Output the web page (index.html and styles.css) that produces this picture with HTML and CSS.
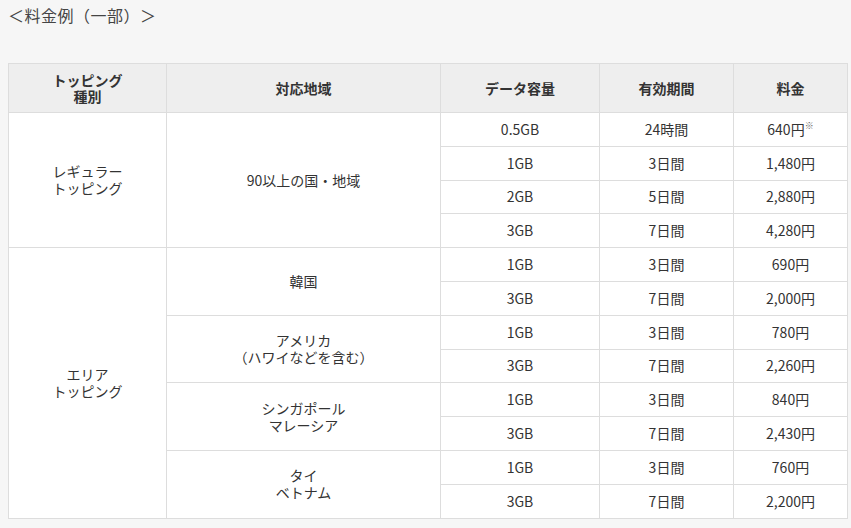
FILE: index.html
```html
<!DOCTYPE html>
<html lang="ja">
<head>
<meta charset="utf-8">
<link rel="stylesheet" href="styles.css">
</head>
<body>
<p class="title">＜料金例（一部）＞</p>
<table class="price">
<colgroup>
<col class="c1"><col class="c2"><col class="c3"><col class="c4"><col class="c5">
</colgroup>
<thead>
<tr><th>トッピング<br>種別</th><th>対応地域</th><th>データ容量</th><th>有効期間</th><th>料金</th></tr>
</thead>
<tbody>
<tr><td rowspan="4">レギュラー<br>トッピング</td><td rowspan="4">90以上の国・地域</td><td>0.5GB</td><td>24時間</td><td>640円<sup>※</sup></td></tr>
<tr><td>1GB</td><td>3日間</td><td>1,480円</td></tr>
<tr><td>2GB</td><td>5日間</td><td>2,880円</td></tr>
<tr><td>3GB</td><td>7日間</td><td>4,280円</td></tr>
<tr><td rowspan="8">エリア<br>トッピング</td><td rowspan="2">韓国</td><td>1GB</td><td>3日間</td><td>690円</td></tr>
<tr><td>3GB</td><td>7日間</td><td>2,000円</td></tr>
<tr><td rowspan="2">アメリカ<br>（ハワイなどを含む）</td><td>1GB</td><td>3日間</td><td>780円</td></tr>
<tr><td>3GB</td><td>7日間</td><td>2,260円</td></tr>
<tr><td rowspan="2">シンガポール<br>マレーシア</td><td>1GB</td><td>3日間</td><td>840円</td></tr>
<tr><td>3GB</td><td>7日間</td><td>2,430円</td></tr>
<tr><td rowspan="2">タイ<br>ベトナム</td><td>1GB</td><td>3日間</td><td>760円</td></tr>
<tr><td>3GB</td><td>7日間</td><td>2,200円</td></tr>
</tbody>
</table>
</body>
</html>
```
FILE: styles.css
```css
html, body {
  margin: 0;
  background: #f6f6f6;
}
body {
  padding: 0 8px;
  font-family: "Noto Sans CJK JP", "Noto Sans", sans-serif;
  color: #333;
}
.title {
  margin: 0;
  padding-top: 4px;
  font-size: 16px;
  line-height: 22px;
  letter-spacing: 0.5px;
  color: #444;
}
.price {
  margin-top: 37px;
  width: 839px;
  border-collapse: collapse;
  table-layout: fixed;
  background: #fff;
  font-size: 14px;
}
.c1 { width: 158px; }
.c2 { width: 274px; }
.c3 { width: 159px; }
.c4 { width: 134px; }
.c5 { width: 114px; }
.price th, .price td {
  border: 1px solid #dddddd;
  text-align: center;
  vertical-align: middle;
  padding: 0;
}
.price th {
  background: #eeeeee;
  font-weight: bold;
  line-height: 16px;
  height: 48px;
  color: #333;
}
.price td {
  line-height: 17px;
  height: 32.8px;
}
.price sup {
  font-size: 9px;
  line-height: 0;
  vertical-align: 6px;
  color: #666;
}
```
